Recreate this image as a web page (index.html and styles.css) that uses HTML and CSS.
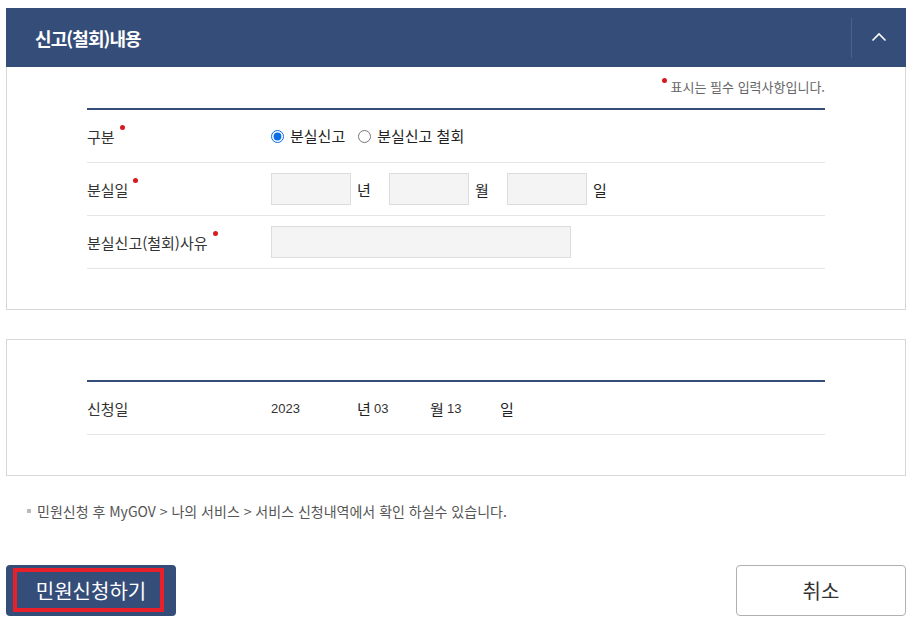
FILE: index.html
```html
<!DOCTYPE html>
<html lang="ko">
<head>
<meta charset="utf-8">
<title>신고(철회)내용</title>
<link rel="stylesheet" href="styles.css">
</head>
<body>
<div class="page">
  <section class="panel">
    <header class="panel-head">
      <h2 class="panel-title">신고(철회)내용</h2>
      <button class="toggle" type="button" aria-label="접기">
        <svg width="16" height="10" viewBox="0 0 16 10"><path d="M1.5 8.5 L8 2 L14.5 8.5" fill="none" stroke="#fff" stroke-width="1.6"/></svg>
      </button>
    </header>
    <div class="panel-body">
      <p class="req-note"><span class="dot"></span>표시는 필수 입력사항입니다.</p>
      <div class="table">
        <div class="row">
          <div class="th"><span class="req">구분</span></div>
          <div class="td">
            <label class="radio"><input type="radio" name="kind" checked>분실신고</label>
            <label class="radio"><input type="radio" name="kind">분실신고 철회</label>
          </div>
        </div>
        <div class="row">
          <div class="th"><span class="req">분실일</span></div>
          <div class="td">
            <input class="field short" type="text"><span class="unit">년</span>
            <input class="field short" type="text"><span class="unit">월</span>
            <input class="field short" type="text"><span class="unit">일</span>
          </div>
        </div>
        <div class="row">
          <div class="th"><span class="req">분실신고(철회)사유</span></div>
          <div class="td">
            <input class="field long" type="text">
          </div>
        </div>
      </div>
    </div>
  </section>

  <section class="box">
    <div class="table">
      <div class="row">
        <div class="th">신청일</div>
        <div class="td date">
          <span class="num y">2023</span><span class="dunit">년</span><span class="num m">03</span><span class="dunit">월</span><span class="num d">13</span><span class="dunit">일</span>
        </div>
      </div>
    </div>
  </section>

  <p class="info"><span class="bullet"></span>민원신청 후 MyGOV &gt; 나의 서비스 &gt; 서비스 신청내역에서 확인 하실수 있습니다.</p>

  <div class="actions">
    <button class="btn primary" type="button">민원신청하기<span class="mark"></span></button>
    <button class="btn cancel" type="button">취소</button>
  </div>
</div>
</body>
</html>
```
FILE: styles.css
```css
* { box-sizing: border-box; }
html, body { margin: 0; padding: 0; background: #fff; }
body {
  font-family: "Noto Sans CJK KR", "Noto Sans", "Liberation Sans", sans-serif;
  color: #333;
}
.page {
  width: 918px;
  padding: 8px 12px 0 6px;
}
.panel-head {
  height: 59px;
  background: #354d79;
  display: flex;
  align-items: center;
  justify-content: space-between;
  padding-left: 29px;
}
.panel-title {
  margin: 0;
  color: #fff;
  font-size: 18px;
  font-weight: 700;
  letter-spacing: -0.9px;
  line-height: 24px;
}
.toggle {
  width: 55px;
  height: 40px;
  margin-top: 1px;
  border: 0;
  border-left: 1px solid #4c6390;
  background: transparent;
  padding: 0;
  display: flex;
  align-items: center;
  justify-content: center;
}
.toggle svg { display: block; margin-top: -2px; }
.panel-body {
  border: 1px solid #d7d7d7;
  border-top: 0;
  padding: 0 80px 40px 80px;
}
.req-note {
  margin: 0;
  padding-top: 10px;
  margin-bottom: 11px;
  line-height: 20px;
  height: 30px;
  text-align: right;
  font-size: 13px;
  color: #666;
  letter-spacing: 0;
}
.req-note .dot,
.req::after {
  display: inline-block;
  width: 5px;
  height: 5px;
  border-radius: 50%;
  background: #d71920;
  vertical-align: top;
}
.req-note .dot { margin: 1px 4px 0 0; }
.req::after {
  content: "";
  position: relative;
  top: -2px;
  margin-left: 5px;
}
.table { border-top: 2px solid #354d79; }
.row {
  display: flex;
  align-items: center;
  height: 53px;
  border-bottom: 1px solid #e6e6e6;
}
.th {
  width: 184px;
  flex: none;
  font-size: 15px;
  color: #333;
  line-height: 20px;
  padding-top: 2px;
}
.td {
  display: flex;
  align-items: center;
  font-size: 15px;
}
.radio {
  display: inline-flex;
  align-items: center;
  margin-right: 13px;
  font-size: 15px;
  line-height: 20px;
  color: #222;
}
.radio input {
  margin: 0 6px 0 0;
  width: 13px;
  height: 13px;
  accent-color: #0a6fe6;
}
.field {
  height: 32px;
  border: 1px solid #dcdcdc;
  background: #f4f4f4;
  margin: 0;
  padding: 0 6px;
  font: inherit;
}
.field.short { width: 80px; }
.field.long { width: 300px; }
.unit {
  width: 38px;
  padding-left: 6px;
  font-size: 15px;
  color: #222;
}
.box {
  margin-top: 29px;
  border: 1px solid #d7d7d7;
  padding: 40px 80px 40px 80px;
}
.date { font-size: 13px; color: #333; }
.num { display: inline-block; font-family: "Liberation Sans", Arial, sans-serif; font-size: 13px; }
.num.y { width: 86px; }
.num.m { width: 56px; }
.num.d { width: 53px; }
.dunit { display: inline-block; width: 17px; font-size: 15px; color: #222; }
.info {
  margin: 25px 0 0 0;
  padding-left: 21px;
  line-height: 20px;
  font-size: 14px;
  color: #555;
  letter-spacing: 0;
  display: flex;
  align-items: center;
}
.bullet {
  width: 4px;
  height: 4px;
  background: #bbb;
  margin-right: 6px;
}
.actions {
  margin-top: 44px;
  display: flex;
  justify-content: space-between;
}
.btn {
  width: 170px;
  height: 51px;
  border-radius: 4px;
  font-family: inherit;
  font-size: 20px;
  padding: 0;
  line-height: 26px;
}
.btn.primary {
  position: relative;
  background: #354d79;
  border: 0;
  color: #fff;
}
.btn.primary .mark {
  position: absolute;
  left: 7px;
  top: 3px;
  width: 151px;
  height: 44px;
  border: 4px solid #e8202a;
}
.btn.cancel {
  background: #fff;
  border: 1px solid #b0b0b0;
  color: #333;
}
```
